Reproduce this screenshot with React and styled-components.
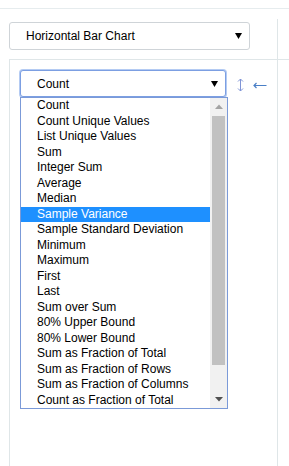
import React from "react";
import styled, { createGlobalStyle } from "styled-components";

const aggregators = [
  "Count",
  "Count Unique Values",
  "List Unique Values",
  "Sum",
  "Integer Sum",
  "Average",
  "Median",
  "Sample Variance",
  "Sample Standard Deviation",
  "Minimum",
  "Maximum",
  "First",
  "Last",
  "Sum over Sum",
  "80% Upper Bound",
  "80% Lower Bound",
  "Sum as Fraction of Total",
  "Sum as Fraction of Rows",
  "Sum as Fraction of Columns",
  "Count as Fraction of Total",
];

const GlobalStyle = createGlobalStyle`
  html, body, #root {
    height: 100%;
    margin: 0;
  }
  body {
    background: #fff;
    color: #000;
    font-family: "Liberation Sans", Arial, sans-serif;
    font-size: 12px;
    overflow: hidden;
  }
`;

const Page = styled.div`
  height: 100%;
  display: flex;
  flex-direction: column;
`;

const TopBar = styled.div`
  height: 8px;
  flex-shrink: 0;
  border-bottom: 1px solid #e6ecee;
`;

const PivotUi = styled.div`
  flex: 1;
  display: grid;
  grid-template-columns: 268px 1fr;
  grid-template-rows: 40px 1fr;
  margin: 10px 0 0 9px;
`;

const RendererCell = styled.div`
  padding-top: 3px;
`;

const AxisCell = styled.div`
  border-left: 1px solid #dfe6e8;
  border-top: ${(p) => (p.$lower ? "1px solid #dfe6e8" : "none")};
`;

const ValsCell = styled.div`
  border-left: 1px solid #dfe6e8;
  border-top: 1px solid #dfe6e8;
  padding: 10px;
`;

const SelectBox = styled.div`
  box-sizing: border-box;
  width: ${(p) => p.$width}px;
  height: ${(p) => p.$height}px;
  display: flex;
  align-items: center;
  justify-content: space-between;
  padding: 0 4px 0 16px;
  background: #fff;
  border: 1px solid ${(p) => (p.$focused ? "#7c9fe2" : "#cfd4d8")};
  border-radius: 3px;
  box-shadow: ${(p) => (p.$focused ? "0 0 0 1px #b4cbf3" : "none")};
`;

const Caret = styled.svg`
  width: 7px;
  height: 6px;
  margin-right: 3px;
`;

const ValsRow = styled.div`
  display: flex;
  align-items: center;
  position: relative;
`;

const OrderLink = styled.svg`
  margin-left: ${(p) => p.$gap}px;
  margin-top: 3px;
  cursor: pointer;
  flex-shrink: 0;
`;

const ListBox = styled.div`
  position: absolute;
  top: 27px;
  left: 0;
  box-sizing: border-box;
  width: 208px;
  height: 312px;
  border: 1px solid #7b9ad8;
  background: #fff;
  display: flex;
`;

const Options = styled.div`
  flex: 1;
  display: flex;
  flex-direction: column;
`;

const Option = styled.div`
  height: 15.5px;
  line-height: 15.5px;
  padding-left: 16px;
  white-space: nowrap;
  overflow: hidden;
  background: ${(p) => (p.$selected ? "#1e90ff" : "transparent")};
  color: ${(p) => (p.$selected ? "#fff" : "#000")};
`;

const Scrollbar = styled.div`
  width: 17px;
  background: #f1f1f1;
  display: flex;
  flex-direction: column;
  align-items: center;
`;

const ScrollArrow = styled.div`
  height: 17px;
  width: 100%;
  display: flex;
  align-items: center;
  justify-content: center;
`;

const ScrollTrack = styled.div`
  flex: 1;
  width: 100%;
  display: flex;
  justify-content: center;
  padding-top: 1px;
`;

const Thumb = styled.div`
  width: 13px;
  height: 249px;
  background: #c1c1c1;
`;

const Triangle = ({ down, color }) => (
  <svg width="8" height="5" viewBox="0 0 8 5">
    <path d={down ? "M0 0H8L4 4.5Z" : "M0 5H8L4 0.5Z"} fill={color} />
  </svg>
);

const Select = ({ value, width, height, focused }) => (
  <SelectBox $width={width} $height={height} $focused={focused}>
    <span>{value}</span>
    <Caret viewBox="0 0 7 6">
      <path d="M0 0H7L3.5 6Z" fill="#000" />
    </Caret>
  </SelectBox>
);

// ↕ row order toggle
const RowOrder = () => (
  <OrderLink $gap={11} width="7" height="14" viewBox="0 0 7 14">
    <path
      d="M3.5 1V13M1 3.5L3.5 1L6 3.5M1 10.5L3.5 13L6 10.5"
      stroke="#7f94d6"
      strokeWidth="1"
      fill="none"
    />
  </OrderLink>
);

// ← column order toggle
const ColOrder = () => (
  <OrderLink $gap={9} width="14" height="7" viewBox="0 0 14 7">
    <path
      d="M1 3.5H13.5M3.5 1L1 3.5L3.5 6"
      stroke="#4a7fc6"
      strokeWidth="1.2"
      fill="none"
    />
  </OrderLink>
);

export default function App() {
  return (
    <>
      <GlobalStyle />
      <Page>
        <TopBar />
        <PivotUi>
          <RendererCell>
            <Select value="Horizontal Bar Chart" width={241} height={28} />
          </RendererCell>
          <AxisCell />
          <ValsCell>
            <ValsRow>
              <Select value="Count" width={208} height={27} focused />
              <RowOrder />
              <ColOrder />
              <ListBox>
                <Options>
                  {aggregators.map((name) => (
                    <Option key={name} $selected={name === "Sample Variance"}>
                      {name}
                    </Option>
                  ))}
                </Options>
                <Scrollbar>
                  <ScrollArrow>
                    <Triangle color="#a3a3a3" />
                  </ScrollArrow>
                  <ScrollTrack>
                    <Thumb />
                  </ScrollTrack>
                  <ScrollArrow>
                    <Triangle down color="#505050" />
                  </ScrollArrow>
                </Scrollbar>
              </ListBox>
            </ValsRow>
          </ValsCell>
          <AxisCell $lower />
        </PivotUi>
      </Page>
    </>
  );
}
